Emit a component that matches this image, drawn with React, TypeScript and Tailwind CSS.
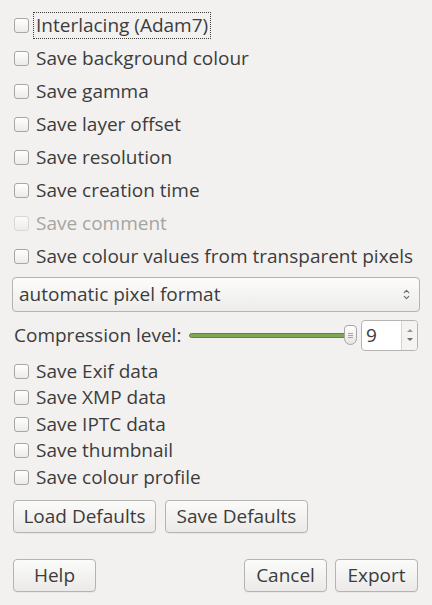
import { ChevronUp, ChevronDown } from 'lucide-react'

const TOP = [
  { label: 'Interlacing (Adam7)', focus: true },
  { label: 'Save background colour' },
  { label: 'Save gamma' },
  { label: 'Save layer offset' },
  { label: 'Save resolution' },
  { label: 'Save creation time' },
  { label: 'Save comment', disabled: true },
  { label: 'Save colour values from transparent pixels' },
]

const META = ['Save Exif data', 'Save XMP data', 'Save IPTC data', 'Save thumbnail', 'Save colour profile']

function Box({ disabled }: { disabled?: boolean }) {
  return (
    <span
      className={`w-[15px] h-[15px] shrink-0 rounded-[3px] border bg-gradient-to-b from-white to-[#ecebea] ${
        disabled ? 'border-[#cfcdcb] opacity-70' : 'border-[#a8a6a3]'
      }`}
    />
  )
}

function Check({ label, disabled, focus, h }: { label: string; disabled?: boolean; focus?: boolean; h: string }) {
  return (
    <div className={`flex items-center ${h} pl-[14px]`}>
      <Box disabled={disabled} />
      <span
        className={`ml-[4px] px-[2px] leading-[25px] whitespace-nowrap ${
          focus ? 'border border-dotted border-[#3c3c3c]' : 'border border-transparent'
        } ${disabled ? 'text-[#a6a4a1]' : 'text-[#3c3c3c]'}`}
      >
        {label}
      </span>
    </div>
  )
}

function Btn({ children, w }: { children: string; w: string }) {
  return (
    <button
      className={`${w} h-[33px] rounded-[4px] border border-[#b6b4b1] bg-gradient-to-b from-[#fbfbfa] to-[#ebeae8] text-[#3c3c3c] shadow-[0_1px_0_rgba(0,0,0,0.04)]`}
    >
      {children}
    </button>
  )
}

export default function App() {
  return (
    <div
      className="w-[432px] h-[605px] bg-[#f2f1f0] text-[#3c3c3c] text-[19px] overflow-hidden"
      style={{ fontFamily: '"Open Sans", "DejaVu Sans", sans-serif' }}
    >
      <div className="pt-[9px]">
        {TOP.map(r => (
          <Check key={r.label} label={r.label} disabled={r.disabled} focus={r.focus} h="h-[33px]" />
        ))}
      </div>

      <div className="mx-[12px] mt-[4px] h-[35px] flex items-center justify-between rounded-[4px] border border-[#b6b4b1] bg-gradient-to-b from-[#fcfcfb] to-[#edecea] pl-[6px] pr-[8px]">
        <span>automatic pixel format</span>
        <span className="flex flex-col items-center text-[#6b6a68] -space-y-[3px]">
          <ChevronUp size={9} strokeWidth={3} />
          <ChevronDown size={9} strokeWidth={3} />
        </span>
      </div>

      <div className="flex items-center h-[32px] mt-[7px] pl-[14px] pr-[14px]">
        <span className="whitespace-nowrap">Compression level:</span>
        <div className="flex-1 flex items-center ml-[8px] mr-[10px] relative">
          <div className="h-[5px] flex-1 rounded-full bg-[#7fa651] border border-[#5e8a34]" />
          <div className="absolute right-[-6px] top-1/2 -translate-y-1/2 w-[13px] h-[20px] rounded-t-[5px] rounded-b-[8px] border border-[#a7a5a2] bg-gradient-to-b from-white to-[#e6e5e3] flex flex-col items-center justify-center gap-[1px]">
            <span className="w-[5px] h-px bg-[#a7a5a2]" />
            <span className="w-[5px] h-px bg-[#a7a5a2]" />
            <span className="w-[5px] h-px bg-[#a7a5a2]" />
          </div>
        </div>
        <div className="flex h-[31px] w-[57px] shrink-0 rounded-[4px] border border-[#b6b4b1] bg-white overflow-hidden">
          <span className="flex-1 pl-[4px] leading-[29px]">9</span>
          <span className="w-[16px] border-l border-[#d6d4d1] bg-[#f4f3f2] flex flex-col items-center justify-center text-[#7a7977] gap-[6px]">
            <span className="w-0 h-0 border-l-[3px] border-r-[3px] border-b-[3px] border-l-transparent border-r-transparent border-b-[#9a9896]" />
            <span className="w-0 h-0 border-l-[3px] border-r-[3px] border-t-[3px] border-l-transparent border-r-transparent border-t-[#6b6a68]" />
          </span>
        </div>
      </div>

      <div className="mt-[7px]">
        {META.map(l => (
          <Check key={l} label={l} h="h-[26.5px]" />
        ))}
      </div>

      <div className="flex gap-[9px] pl-[13px] mt-[9px]">
        <Btn w="w-[143px]">Load Defaults</Btn>
        <Btn w="w-[143px]">Save Defaults</Btn>
      </div>

      <div className="flex items-center pl-[13px] pr-[14px] mt-[26px]">
        <Btn w="w-[83px]">Help</Btn>
        <div className="flex-1" />
        <Btn w="w-[83px]">Cancel</Btn>
        <div className="w-[8px]" />
        <Btn w="w-[83px]">Export</Btn>
      </div>
    </div>
  )
}
